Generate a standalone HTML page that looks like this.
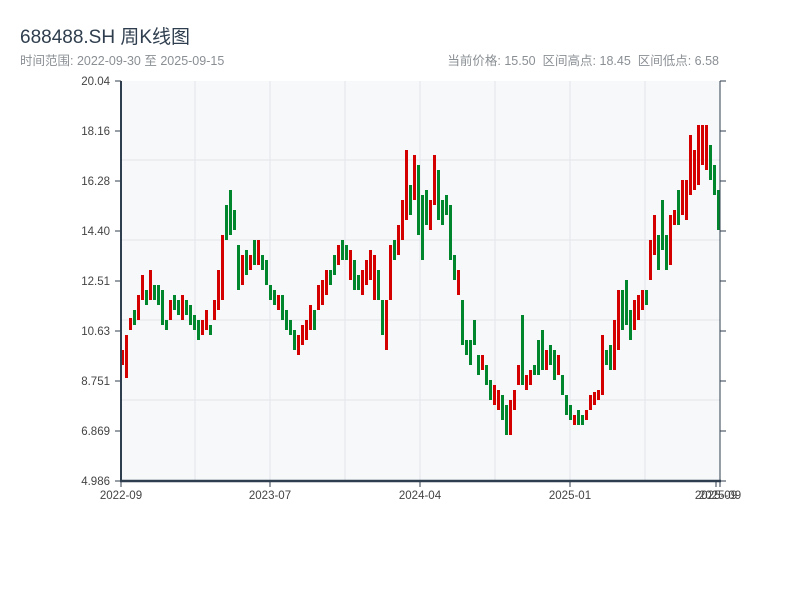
<!DOCTYPE html>
<html><head><meta charset="utf-8"><style>
body{margin:0;width:800px;height:600px;background:#fff;font-family:"Liberation Sans","Noto Sans CJK SC",sans-serif;overflow:hidden;position:relative}
.t{position:absolute;left:20px;top:22px;font-size:19px;color:#2f3e4e}
.s{position:absolute;top:50px;font-size:12.5px;color:#8a8f94}
svg{position:absolute;left:0;top:0}
</style></head><body>
<div class="t">688488.SH 周K线图</div>
<div class="s" style="left:20px">时间范围: 2022-09-30 至 2025-09-15</div>
<div class="s" style="right:81px">当前价格: 15.50 &nbsp;区间高点: 18.45 &nbsp;区间低点: 6.58</div>
<svg width="800" height="600" font-family="Liberation Sans, sans-serif" font-size="11.5">
<rect x="121" y="81" width="599" height="400" fill="#f7f8fa"/>
<g stroke="#e2e5ea" stroke-width="1">
<line x1="121" y1="160" x2="720" y2="160"/><line x1="121" y1="240" x2="720" y2="240"/><line x1="121" y1="320" x2="720" y2="320"/><line x1="121" y1="400" x2="720" y2="400"/>
<line x1="195" y1="81" x2="195" y2="481"/><line x1="270" y1="81" x2="270" y2="481"/><line x1="345" y1="81" x2="345" y2="481"/><line x1="420" y1="81" x2="420" y2="481"/><line x1="495" y1="81" x2="495" y2="481"/><line x1="570" y1="81" x2="570" y2="481"/><line x1="645" y1="81" x2="645" y2="481"/>
</g>
<path fill="#d40000" d="M121 350h3v15h-3z M125 335h3v43h-3z M129 318h3v12h-3z M137 295h3v25h-3z M141 275h3v25h-3z M149 270h3v30h-3z M169 300h3v20h-3z M181 295h3v25h-3z M201 320h3v15h-3z M205 310h3v20h-3z M213 300h3v20h-3z M217 270h3v40h-3z M221 235h3v65h-3z M241 255h3v30h-3z M249 255h3v15h-3z M257 240h3v25h-3z M277 295h3v15h-3z M297 335h3v20h-3z M301 325h3v20h-3z M305 320h3v20h-3z M309 305h3v25h-3z M317 285h3v25h-3z M321 280h3v25h-3z M325 270h3v25h-3z M337 245h3v20h-3z M349 250h3v30h-3z M361 270h3v25h-3z M365 260h3v25h-3z M369 250h3v30h-3z M373 255h3v45h-3z M385 300h3v50h-3z M389 245h3v55h-3z M397 225h3v30h-3z M401 200h3v40h-3z M405 150h3v70h-3z M413 155h3v45h-3z M429 200h3v30h-3z M433 155h3v50h-3z M457 270h3v25h-3z M481 355h3v15h-3z M493 385h3v20h-3z M497 390h3v20h-3z M509 400h3v35h-3z M513 390h3v20h-3z M517 365h3v20h-3z M525 375h3v15h-3z M529 370h3v15h-3z M545 350h3v20h-3z M557 355h3v20h-3z M573 415h3v10h-3z M585 410h3v10h-3z M589 395h3v15h-3z M593 392h3v13h-3z M597 390h3v10h-3z M601 335h3v60h-3z M613 320h3v50h-3z M617 290h3v60h-3z M633 300h3v30h-3z M637 295h3v25h-3z M641 290h3v20h-3z M649 240h3v40h-3z M653 215h3v40h-3z M669 215h3v50h-3z M673 210h3v15h-3z M681 180h3v35h-3z M685 180h3v40h-3z M689 135h3v60h-3z M693 150h3v40h-3z M697 125h3v60h-3z M701 125h3v40h-3z M705 125h3v45h-3z"/>
<path fill="#00872e" d="M133 310h3v15h-3z M145 290h3v15h-3z M153 285h3v15h-3z M157 285h3v20h-3z M161 290h3v35h-3z M165 320h3v10h-3z M173 295h3v15h-3z M177 300h3v15h-3z M185 300h3v15h-3z M189 305h3v20h-3z M193 315h3v15h-3z M197 320h3v20h-3z M209 325h3v10h-3z M225 205h3v35h-3z M229 190h3v45h-3z M233 210h3v20h-3z M237 245h3v45h-3z M245 250h3v25h-3z M253 240h3v25h-3z M261 255h3v15h-3z M265 260h3v25h-3z M269 285h3v15h-3z M273 290h3v15h-3z M281 295h3v25h-3z M285 310h3v20h-3z M289 320h3v15h-3z M293 330h3v20h-3z M313 310h3v20h-3z M329 270h3v15h-3z M333 255h3v20h-3z M341 240h3v20h-3z M345 245h3v15h-3z M353 260h3v30h-3z M357 275h3v15h-3z M377 270h3v30h-3z M381 300h3v35h-3z M393 240h3v20h-3z M409 185h3v30h-3z M417 165h3v70h-3z M421 195h3v65h-3z M425 190h3v35h-3z M437 170h3v50h-3z M441 200h3v25h-3z M445 195h3v20h-3z M449 205h3v55h-3z M453 255h3v25h-3z M461 300h3v45h-3z M465 340h3v15h-3z M469 340h3v25h-3z M473 320h3v25h-3z M477 355h3v20h-3z M485 365h3v20h-3z M489 380h3v20h-3z M501 395h3v25h-3z M505 405h3v30h-3z M521 315h3v70h-3z M533 365h3v10h-3z M537 340h3v35h-3z M541 330h3v40h-3z M549 345h3v20h-3z M553 350h3v30h-3z M561 375h3v20h-3z M565 395h3v20h-3z M569 405h3v15h-3z M577 410h3v15h-3z M581 415h3v10h-3z M605 350h3v15h-3z M609 345h3v25h-3z M621 290h3v40h-3z M625 280h3v45h-3z M629 310h3v30h-3z M645 290h3v15h-3z M657 235h3v35h-3z M661 200h3v50h-3z M665 235h3v35h-3z M677 190h3v35h-3z M709 145h3v35h-3z M713 165h3v30h-3z M717 190h3v40h-3z"/>
<g stroke="#2f3e4e">
<line x1="121" y1="81" x2="121" y2="482" stroke-width="2"/>
<line x1="120" y1="481" x2="721" y2="481" stroke-width="2.5"/>
<line x1="720" y1="81" x2="720" y2="481" stroke-width="1"/>
<path fill="none" d="M115 81h6M115 131h6M115 181h6M115 231h6M115 281h6M115 331h6M115 381h6M115 431h6M115 481h6M720 81h6M720 131h6M720 181h6M720 231h6M720 281h6M720 331h6M720 381h6M720 431h6M720 481h6M121 481v6M270 481v6M420 481v6M570 481v6M716 481v6M720 481v6"/>
</g>
<g text-anchor="end" fill="#444">
<text x="110" y="85">20.04</text><text x="110" y="135">18.16</text><text x="110" y="185">16.28</text><text x="110" y="235">14.40</text><text x="110" y="285">12.51</text><text x="110" y="335">10.63</text><text x="110" y="385">8.751</text><text x="110" y="435">6.869</text><text x="110" y="485">4.986</text>
</g>
<g text-anchor="middle" fill="#444">
<text x="121" y="499">2022-09</text><text x="270" y="499">2023-07</text><text x="420" y="499">2024-04</text><text x="570" y="499">2025-01</text><text x="716" y="499">2025-09</text><text x="720" y="499">2025-09</text>
</g>
</svg>
</body></html>
